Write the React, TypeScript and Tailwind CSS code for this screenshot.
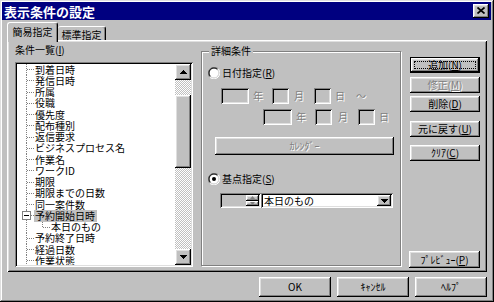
import React from "react";

const raised =
  "bg-[#c0c0c0] shadow-[inset_-1px_-1px_#000,inset_1px_1px_#fff,inset_-2px_-2px_#808080,inset_2px_2px_#dfdfdf]";
const raisedDefault =
  "bg-[#c0c0c0] shadow-[inset_0_0_0_1px_#000,inset_-2px_-2px_#000,inset_2px_2px_#fff,inset_-3px_-3px_#808080,inset_3px_3px_#dfdfdf]";
const sunken =
  "shadow-[inset_1px_1px_#808080,inset_-1px_-1px_#fff,inset_2px_2px_#000,inset_-2px_-2px_#dfdfdf]";
const grayed = "text-[#808080] [text-shadow:1px_1px_0_#fff]";

type Item = { label: string; child?: boolean; open?: boolean; selected?: boolean };

const items: Item[] = [
  { label: "到着日時" },
  { label: "発信日時" },
  { label: "所属" },
  { label: "役職" },
  { label: "優先度" },
  { label: "配布種別" },
  { label: "返信要求" },
  { label: "ビジネスプロセス名" },
  { label: "作業名" },
  { label: "ワークID" },
  { label: "期限" },
  { label: "期限までの日数" },
  { label: "同一案件数" },
  { label: "予約開始日時", open: true, selected: true },
  { label: "本日のもの", child: true },
  { label: "予約終了日時" },
  { label: "経過日数" },
  { label: "作業状態" },
];

function TreeRow({ item }: { item: Item }) {
  return (
    <div className="flex h-[11.25px] items-stretch whitespace-nowrap">
      <svg width={item.child ? 31 : 15} className="h-full shrink-0" shapeRendering="crispEdges">
        <g stroke="#808080" strokeDasharray="1 1" fill="none">
          <line x1="7.5" y1="0" x2="7.5" y2="100%" />
          {!item.child && !item.open && <line x1="8" y1="50%" x2="15" y2="50%" />}
          {item.open && <line x1="12" y1="50%" x2="15" y2="50%" />}
          {item.child && (
            <>
              <line x1="23.5" y1="0" x2="23.5" y2="50%" />
              <line x1="24" y1="50%" x2="31" y2="50%" />
            </>
          )}
        </g>
        {item.open && (
          <g>
            <rect x="3.5" y="1.5" width="8" height="8" fill="#fff" stroke="#808080" />
            <line x1="5" y1="5.5" x2="10" y2="5.5" stroke="#000" />
          </g>
        )}
      </svg>
      <span
        className={`flex items-center pl-[1px] pr-[2px] text-[10px] leading-[10px] text-black ${
          item.selected ? "bg-[#c0c0c0]" : ""
        }`}
      >
        {item.label}
      </span>
    </div>
  );
}

function Arrow({ dir, gray = false }: { dir: "up" | "down"; gray?: boolean }) {
  return (
    <svg width="7" height="4" viewBox="0 0 7 4" shapeRendering="crispEdges">
      <path d={dir === "up" ? "M3.5 0L7 4H0Z" : "M0 0H7L3.5 4Z"} fill={gray ? "#808080" : "#000"} />
    </svg>
  );
}

function Radio({ checked }: { checked?: boolean }) {
  return (
    <svg width="12" height="12" viewBox="0 0 12 12" className="shrink-0">
      <circle cx="6" cy="6" r="4.5" fill="#fff" />
      <path d="M1.76 10.24A6 6 0 0 1 10.24 1.76" stroke="#808080" fill="none" />
      <path d="M10.24 1.76A6 6 0 0 1 1.76 10.24" stroke="#fff" fill="none" />
      <path d="M2.46 9.54A5 5 0 0 1 9.54 2.46" stroke="#000" fill="none" />
      <path d="M9.54 2.46A5 5 0 0 1 2.46 9.54" stroke="#dfdfdf" fill="none" />
      {checked && <circle cx="6" cy="6" r="2" fill="#000" />}
    </svg>
  );
}

function Btn({
  children,
  className = "",
  disabled = false,
}: {
  children: React.ReactNode;
  className?: string;
  disabled?: boolean;
}) {
  return (
    <div
      className={`flex items-center justify-center text-[10px] leading-none ${raised} ${
        disabled ? grayed : "text-black"
      } ${className}`}
    >
      {children}
    </div>
  );
}

function Field({ className = "" }: { className?: string }) {
  return <div className={`h-[16px] shrink-0 bg-[#c0c0c0] ${sunken} ${className}`} />;
}

function Unit({ children, className = "" }: { children: React.ReactNode; className?: string }) {
  return (
    <span className={`w-[10px] shrink-0 text-center text-[10px] leading-[16px] ${grayed} ${className}`}>
      {children}
    </span>
  );
}

export default function App() {
  return (
    <div className="flex h-[302px] w-[494px] flex-col overflow-hidden bg-[#c0c0c0] pb-[3px] pl-[2px] pr-[3px] pt-[2px] font-['Noto_Sans_CJK_JP',sans-serif] shadow-[inset_-1px_-1px_#000,inset_1px_1px_#dfdfdf,inset_-2px_-2px_#808080,inset_2px_2px_#fff]">
      {/* title bar */}
      <div className="flex h-[18px] shrink-0 items-center bg-[#000080] pl-[2px] pr-[2px]">
        <span className="text-[13px] font-bold leading-none text-white">表示条件の設定</span>
        <div className={`ml-auto flex h-[14px] w-[16px] items-center justify-center ${raised}`}>
          <svg width="8" height="7" viewBox="0 0 8 7" className="-mt-[1px]">
            <path d="M0.5 0.5L7.5 6.5M7.5 0.5L0.5 6.5" stroke="#000" strokeWidth="1.7" />
          </svg>
        </div>
      </div>

      <div className="mt-[2px] flex flex-col pl-[5px] pr-[4px]">
        {/* tabs */}
        <div className="flex h-[18px] items-end">
          <div className="relative z-10 -mb-[2px] flex h-[20px] w-[51px] items-start justify-center rounded-t-[3px] border-l border-t border-r border-white border-r-black bg-[#c0c0c0] pt-[4px] text-[10px] leading-[10px] text-black shadow-[inset_-1px_0_#808080]">
            簡易指定
          </div>
          <div className="flex h-[14px] w-[48px] items-start justify-center rounded-t-[3px] border-t border-r border-white border-r-black pt-[3px] text-[10px] leading-[10px] text-black shadow-[inset_-1px_0_#808080]">
            標準指定
          </div>
        </div>

        {/* panel */}
        <div className="flex h-[232px] items-start bg-[#c0c0c0] pl-[8px] shadow-[inset_1px_1px_#fff,inset_-1px_-1px_#000,inset_2px_2px_#dfdfdf,inset_-2px_-2px_#808080]">
          {/* left column: condition list */}
          <div className="flex w-[178px] flex-col">
            <div className="mt-[4px] h-[12px] text-[10px] leading-[12px] text-black">
              条件一覧(<u>I</u>)
            </div>
            <div className={`mt-[6px] flex h-[205px] bg-white p-[2px] ${sunken}`}>
              <div className="flex flex-1 flex-col overflow-hidden pl-[2px]">
                {items.map((it) => (
                  <TreeRow key={it.label} item={it} />
                ))}
              </div>
              <div className="flex w-[16px] flex-col">
                <div className={`flex h-[16px] items-center justify-center ${raised}`}>
                  <Arrow dir="up" />
                </div>
                <div className="h-[15px] bg-[repeating-conic-gradient(#fff_0_25%,#c0c0c0_0_50%)] bg-[length:2px_2px]" />
                <div className={`h-[73px] ${raised}`} />
                <div className="flex-1 bg-[repeating-conic-gradient(#fff_0_25%,#c0c0c0_0_50%)] bg-[length:2px_2px]" />
                <div className={`flex h-[16px] items-center justify-center ${raised}`}>
                  <Arrow dir="down" />
                </div>
              </div>
            </div>
          </div>

          {/* detail group box */}
          <div className="relative ml-[8px] mt-[11px] flex h-[215px] w-[200px] flex-col border border-[#808080] shadow-[inset_1px_1px_#fff,1px_1px_#fff]">
            <span className="absolute -top-[7px] left-[7px] bg-[#c0c0c0] px-[2px] text-[10px] leading-[12px] text-black">
              詳細条件
            </span>

            <div className="ml-[6px] mt-[15px] flex h-[12px] items-center gap-[2px]">
              <Radio />
              <span className="text-[10px] leading-none text-black">
                日付指定(<u>R</u>)
              </span>
            </div>

            <div className="ml-[19px] mt-[9px] flex h-[16px] items-center">
              <Field className="w-[28px]" />
              <Unit className="ml-[4px]">年</Unit>
              <Field className="ml-[9px] w-[17px]" />
              <Unit className="ml-[5px]">月</Unit>
              <Field className="ml-[10px] w-[17px]" />
              <Unit className="ml-[4px]">日</Unit>
              <Unit className="ml-[11px]">～</Unit>
            </div>

            <div className="ml-[61px] mt-[5px] flex h-[16px] items-center">
              <Field className="w-[29px]" />
              <Unit className="ml-[4px]">年</Unit>
              <Field className="ml-[9px] w-[17px]" />
              <Unit className="ml-[6px]">月</Unit>
              <Field className="ml-[10px] w-[17px]" />
              <Unit className="ml-[4px]">日</Unit>
            </div>

            <Btn disabled className="ml-[13px] mt-[12px] h-[18px] w-[179px]">
              ｶﾚﾝﾀﾞｰ
            </Btn>

            <div className="ml-[6px] mt-[18px] flex h-[12px] items-center gap-[2px]">
              <Radio checked />
              <span className="text-[10px] leading-none text-black">
                基点指定(<u>S</u>)
              </span>
            </div>

            <div className="ml-[18px] mt-[8px] flex h-[15px]">
              <div className={`flex w-[41px] justify-end bg-[#c0c0c0] p-[2px] ${sunken}`}>
                <div className="flex w-[13px] flex-col">
                  <div className={`flex flex-1 items-center justify-center ${raised}`}>
                    <svg width="5" height="3" viewBox="0 0 5 3">
                      <path d="M2.5 0L5 3H0Z" fill="#808080" />
                    </svg>
                  </div>
                  <div className={`flex flex-1 items-center justify-center ${raised}`}>
                    <svg width="5" height="3" viewBox="0 0 5 3">
                      <path d="M0 0H5L2.5 3Z" fill="#808080" />
                    </svg>
                  </div>
                </div>
              </div>
              <div className={`flex w-[132px] items-stretch bg-white p-[2px] ${sunken}`}>
                <span className="flex flex-1 items-center pl-[1px] text-[10px] leading-none text-black">
                  本日のもの
                </span>
                <div className={`flex w-[14px] items-center justify-center ${raised}`}>
                  <Arrow dir="down" />
                </div>
              </div>
            </div>
          </div>

          {/* action buttons */}
          <div className="ml-[9px] mt-[17px] flex h-[211px] w-[70px] flex-col">
            <div className={`flex h-[16px] p-[4px] ${raisedDefault}`}>
              <div className="flex flex-1 items-center justify-center border border-dotted border-black text-[10px] leading-none text-black">
                追加(<u>N</u>)
              </div>
            </div>
            <Btn disabled className="mt-[4px] h-[16px]">
              修正(<u>M</u>)
            </Btn>
            <Btn className="mt-[3px] h-[16px]">
              削除(<u>D</u>)
            </Btn>
            <Btn className="mt-[9px] h-[16px]">
              元に戻す(<u>U</u>)
            </Btn>
            <Btn className="mt-[8px] h-[16px]">
              ｸﾘｱ(<u>C</u>)
            </Btn>
            <Btn className="-ml-[1px] mt-auto h-[17px] w-[71px]">
              ﾌﾟﾚﾋﾞｭｰ(<u>P</u>)
            </Btn>
          </div>
        </div>

        {/* dialog buttons */}
        <div className="mt-[5px] flex h-[20px] justify-end gap-[6px]">
          <Btn className="w-[72px]">OK</Btn>
          <Btn className="w-[72px]">ｷｬﾝｾﾙ</Btn>
          <Btn className="w-[72px]">ﾍﾙﾌﾟ</Btn>
        </div>
      </div>
    </div>
  );
}
